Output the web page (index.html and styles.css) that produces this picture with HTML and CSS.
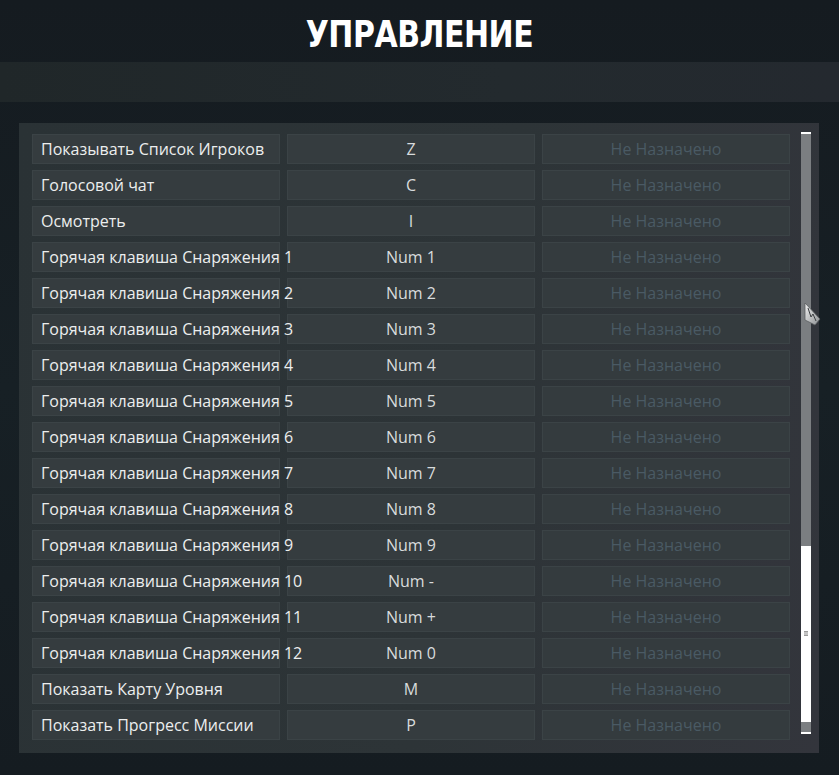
FILE: index.html
```html
<!DOCTYPE html>
<html lang="ru">
<head>
    <meta charset="UTF-8">
    <meta name="viewport" content="width=device-width, initial-scale=1.0">
    <title>Управление</title>
    <link rel="stylesheet" href="styles.css">
</head>
<body>
    <header class="screen-header">
        <h1>УПРАВЛЕНИЕ</h1>
    </header>

    <div class="tab-band"></div>

    <main class="bindings-panel">
        <div class="bindings-list" id="bindings"></div>

        <div class="scrollbar">
            <div class="scroll-cap"></div>
            <div class="scroll-track">
                <div class="scroll-thumb">
                    <span class="grip"></span>
                </div>
            </div>
            <div class="scroll-cap"></div>
        </div>
    </main>

    <!-- mouse pointer resting on the scrollbar -->
    <svg class="pointer" viewBox="0 0 20 26" xmlns="http://www.w3.org/2000/svg">
        <defs>
            <linearGradient id="ptrFill" x1="0" y1="0" x2="1" y2="1">
                <stop offset="0" stop-color="#f2f2f2"/>
                <stop offset="1" stop-color="#8c8f92"/>
            </linearGradient>
        </defs>
        <path d="M2 1 L17 17 L12 23 L2 18 Z" fill="url(#ptrFill)" stroke="#5b5e61" stroke-width="0.8"/>
        <path d="M5 6 L8 15 L10 12 L13 19" fill="none" stroke="#3c3f42" stroke-width="1"/>
    </svg>

    <script>
        // Key binding rows: action, primary key, secondary key
        const bindings = [
            ['Показывать Список Игроков', 'Z'],
            ['Голосовой чат', 'C'],
            ['Осмотреть', 'I'],
            ['Горячая клавиша Снаряжения 1', 'Num 1'],
            ['Горячая клавиша Снаряжения 2', 'Num 2'],
            ['Горячая клавиша Снаряжения 3', 'Num 3'],
            ['Горячая клавиша Снаряжения 4', 'Num 4'],
            ['Горячая клавиша Снаряжения 5', 'Num 5'],
            ['Горячая клавиша Снаряжения 6', 'Num 6'],
            ['Горячая клавиша Снаряжения 7', 'Num 7'],
            ['Горячая клавиша Снаряжения 8', 'Num 8'],
            ['Горячая клавиша Снаряжения 9', 'Num 9'],
            ['Горячая клавиша Снаряжения 10', 'Num -'],
            ['Горячая клавиша Снаряжения 11', 'Num +'],
            ['Горячая клавиша Снаряжения 12', 'Num 0'],
            ['Показать Карту Уровня', 'M'],
            ['Показать Прогресс Миссии', 'P']
        ];

        const list = document.getElementById('bindings');
        let html = '';
        bindings.forEach(([action, key]) => {
            html += `
                <div class="binding-row">
                    <div class="cell cell-action">${action}</div>
                    <div class="cell cell-key">${key}</div>
                    <div class="cell cell-key cell-empty">Не Назначено</div>
                </div>`;
        });
        list.innerHTML = html;
    </script>
</body>
</html>
```

FILE: styles.css
```css
:root {
    --cell-bg: #353c3f;
    --cell-border: #3b4346;
    --text-primary: #eceeee;
    --text-key: #d8dbdc;
    --text-empty: #4a5a64;
}

* {
    margin: 0;
    padding: 0;
    box-sizing: border-box;
}

body {
    width: 839px;
    height: 775px;
    overflow: hidden;
    font-family: 'Open Sans', 'Noto Sans', sans-serif;
    background: linear-gradient(180deg, #151b20 0%, #172025 50%, #151c21 100%);
    color: var(--text-primary);
    position: relative;
}

.screen-header {
    height: 62px;
    display: flex;
    justify-content: center;
    padding-top: 15px;
}

.screen-header h1 {
    font-family: 'DejaVu Sans', sans-serif;
    font-stretch: condensed;
    font-weight: bold;
    font-size: 37px;
    line-height: 40px;
    color: #ffffff;
    letter-spacing: -0.5px;
    transform: scaleX(0.9);
}

.tab-band {
    height: 40px;
    background: linear-gradient(90deg, #202729 0%, #232a2e 60%, #24292f 100%);
}

.bindings-panel {
    margin: 21px 20px 0 19px;
    height: 630px;
    padding: 11px 8px 13px 13px;
    background: linear-gradient(100deg, #2a3235 0%, #2d3437 55%, #33353c 100%);
    display: flex;
    gap: 11px;
}

.bindings-list {
    display: flex;
    flex-direction: column;
    gap: 6px;
}

.binding-row {
    display: flex;
    gap: 7px;
}

.cell {
    width: 248px;
    height: 30px;
    background: var(--cell-bg);
    border: 1px solid var(--cell-border);
    font-size: 16px;
    line-height: 28px;
    white-space: nowrap;
}

/* long action names run on over the key cell */
.cell-action {
    padding-left: 8px;
    color: var(--text-primary);
    position: relative;
    z-index: 1;
}

.cell-key {
    text-align: center;
    color: var(--text-key);
}

.cell-empty {
    color: var(--text-empty);
    background: #343b3e;
}

.scrollbar {
    width: 10px;
    display: flex;
    flex-direction: column;
    margin-top: -2px;
    height: 602px;
}

.scroll-cap {
    height: 2px;
    background: #ffffff;
}

.scroll-track {
    flex: 1;
    background: #7b7e81;
    display: flex;
    flex-direction: column;
    justify-content: flex-end;
    padding-bottom: 10px;
}

.scroll-thumb {
    height: 176px;
    background: #ffffff;
    display: flex;
    align-items: flex-end;
    justify-content: center;
    padding-bottom: 86px;
}

.grip {
    width: 4px;
    height: 5px;
    border-top: 1px solid #9a9a9a;
    border-bottom: 1px solid #9a9a9a;
    background: #c4c4c4;
}

.pointer {
    position: absolute;
    left: 803px;
    top: 302px;
    width: 20px;
    height: 26px;
}
```
